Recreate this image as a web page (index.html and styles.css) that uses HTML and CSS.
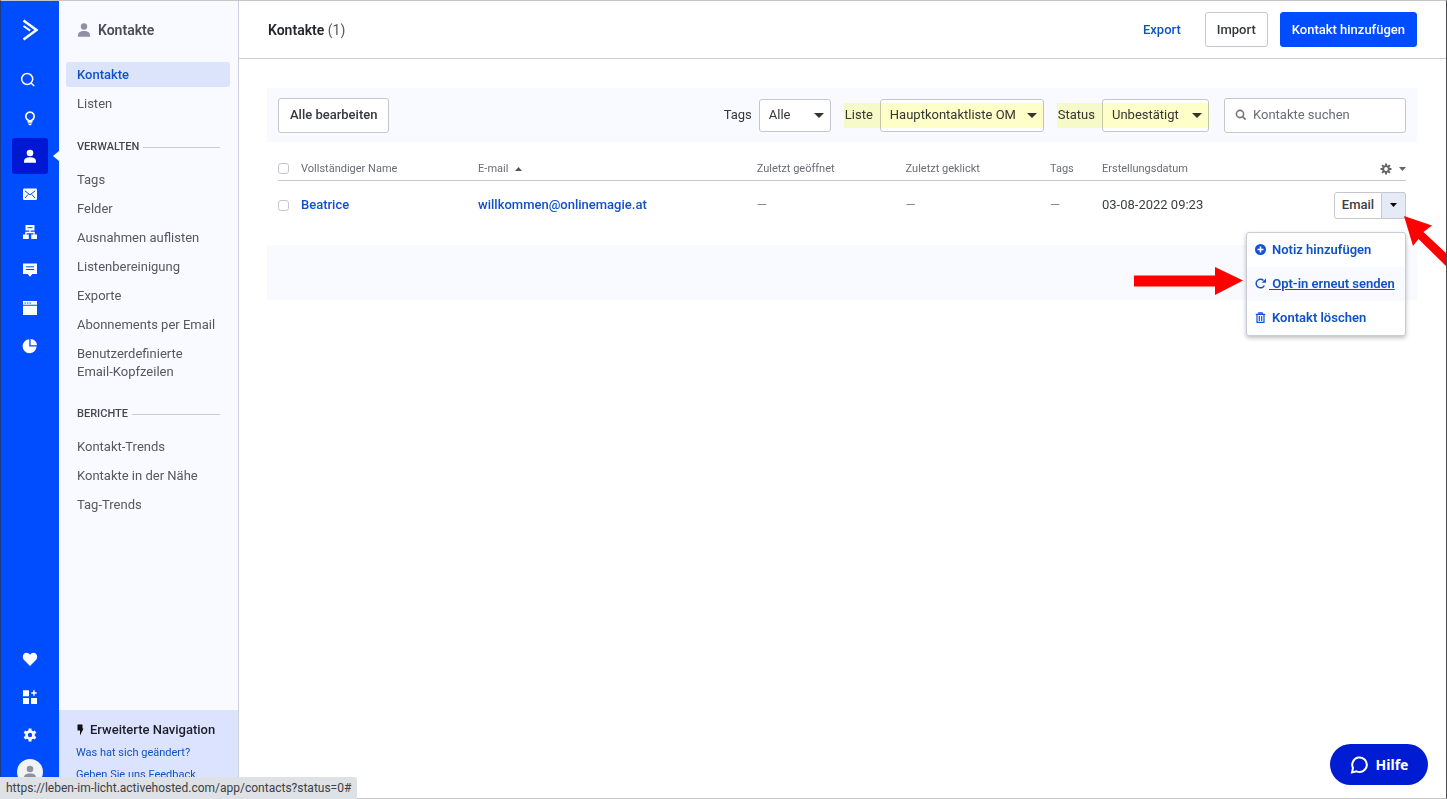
FILE: index.html
```html
<!DOCTYPE html>
<html lang="de">
<head>
<meta charset="utf-8">
<title>Kontakte</title>
<link rel="stylesheet" href="styles.css">
</head>
<body>
<div class="app">
  <nav class="rail" aria-label="Hauptnavigation">
    <a class="logo" href="#" aria-label="Startseite"><svg width="16" height="24" viewBox="0 0 16 24" fill="none" stroke="#fff"><path stroke-width="2.6" d="M1.500 2.500 14.500 12 1.500 21.500"/><path stroke-width="1.900" d="M1.500 8 8.200 12.600"/></svg></a>
    <a class="rail-item rail-search" href="#" aria-label="Suche"><svg width="16" height="16" viewBox="0 0 16 16" fill="none" stroke="#fff" stroke-width="1.500"><circle cx="7.200" cy="7" r="5.500"/><path d="m11 11 3.200 3"/></svg></a>
    <a class="rail-item" href="#" aria-label="Tipps"><svg width="16" height="16" viewBox="0 0 16 16"><path fill="none" stroke="#fff" stroke-width="1.800" d="M6.300 10.200A4.200 4.200 0 1 1 9.700 10.200V11H6.300Z"/><path fill="#fff" d="M5.800 12.200h4.400v1H5.800zM6.200 13.800h3.600l-.8 1.400H7z"/></svg></a>
    <a class="rail-item active" href="#" aria-label="Kontakte"><svg width="16" height="16" viewBox="0 0 16 16" fill="#fff"><circle cx="8" cy="5" r="3.300"/><path d="M2 14.800v-1.600c0-2.600 2.200-3.900 6-3.900s6 1.300 6 3.900v1.600z"/></svg></a>
    <a class="rail-item" href="#" aria-label="Kampagnen"><svg width="16" height="16" viewBox="0 0 16 16"><rect x="1" y="2.500" width="14" height="11.500" rx="1.200" fill="#fff"/><path fill="none" stroke="#004cff" stroke-width="1" d="m2.800 4.800 5.200 4 5.200-4M3 12l3.200-3.600M13 12 9.800 8.400"/></svg></a>
    <a class="rail-item" href="#" aria-label="Automatisierungen"><svg width="16" height="16" viewBox="0 0 16 16"><path fill="#fff" d="M3.500 1h9v5.500h-9zM1 10.500h5.800V15H1zM9.200 10.500H15V15H9.200z"/><path fill="none" stroke="#fff" stroke-width="1.300" d="M8 6v2.500M3.900 11V8.500h8.200V11"/><path stroke="#004cff" d="M5.500 3.700h5"/></svg></a>
    <a class="rail-item" href="#" aria-label="Unterhaltungen"><svg width="16" height="16" viewBox="0 0 16 16"><path fill="#fff" d="M1 1.500h14v10.500H10.300L8 14.800 5.700 12H1z"/><path stroke="#004cff" d="M3.800 4.800h8.400M3.800 7.500h8.400"/></svg></a>
    <a class="rail-item" href="#" aria-label="Website"><svg width="16" height="16" viewBox="0 0 16 16" fill="#fff"><path d="M1 1h14v3.800H1zM1 5.800h14V15H1z"/><path stroke="#004cff" stroke-dasharray="1.500 1" d="M2.500 3h7"/></svg></a>
    <a class="rail-item" href="#" aria-label="Berichte"><svg width="16" height="16" viewBox="0 0 16 16" fill="#fff"><path d="M7.300 1.200v7.300h7.300A7 7 0 1 1 7.300 1.200z"/><path d="M8.600.9a7 7 0 0 1 6.500 6.300H8.600z"/></svg></a>
    <div class="rail-bottom">
      <a class="rail-item" href="#" aria-label="Favoriten"><svg width="16" height="16" viewBox="0 0 16 16" fill="#fff"><path d="M8 15 2.300 9.200C-.5 6.300 1 1.800 4.500 1.800c1.500 0 2.700.8 3.500 2 .8-1.200 2-2 3.500-2 3.500 0 5 4.500 2.200 7.400z"/></svg></a>
      <a class="rail-item" href="#" aria-label="Apps"><svg width="16" height="16" viewBox="0 0 16 16" fill="#fff"><path d="M1 1.200h6v6H1zM1 9h6v6H1zM9 9h6v6H9zM11.200 1.200h1.500v2h2v1.500h-2v2h-1.500v-2h-2V3.200h2z"/></svg></a>
      <a class="rail-item" href="#" aria-label="Einstellungen"><svg width="16" height="16" viewBox="0 0 16 16"><g stroke="#fff" stroke-width="3"><path d="M8 1.500v13M2.400 4.800l11.200 6.400M2.400 11.200l11.200-6.400"/></g><circle cx="8" cy="8" r="4.800" fill="#fff"/><circle cx="8" cy="8" r="2.200" fill="#004cff"/></svg></a>
      <a class="avatar" href="#" aria-label="Profil"><svg width="16" height="18" viewBox="0 0 16 18" fill="#9090a0"><circle cx="8" cy="6" r="3.300"/><path d="M2 16v-1.500c0-2.600 2.200-4 6-4s6 1.400 6 4V16z"/></svg></a>
    </div>
  </nav>

  <aside class="sidebar">
    <h2 class="sidebar-title"><svg width="14" height="14" viewBox="0 0 14 14" fill="#8e90a6"><circle cx="7" cy="3.500" r="3.200"/><path d="M1 13.800v-1.600C1 9.600 3.200 8 7 8s6 1.600 6 4.200v1.600z"/></svg>Kontakte</h2>
    <ul class="menu">
      <li><a class="current" href="#">Kontakte</a></li>
      <li><a href="#">Listen</a></li>
    </ul>
    <h3 class="group">Verwalten</h3>
    <ul class="menu">
      <li><a href="#">Tags</a></li>
      <li><a href="#">Felder</a></li>
      <li><a href="#">Ausnahmen auflisten</a></li>
      <li><a href="#">Listenbereinigung</a></li>
      <li><a href="#">Exporte</a></li>
      <li><a href="#">Abonnements per Email</a></li>
      <li><a href="#">Benutzerdefinierte<br>Email-Kopfzeilen</a></li>
    </ul>
    <h3 class="group">Berichte</h3>
    <ul class="menu">
      <li><a href="#">Kontakt-Trends</a></li>
      <li><a href="#">Kontakte in der Nähe</a></li>
      <li><a href="#">Tag-Trends</a></li>
    </ul>
    <div class="promo">
      <h4><svg width="8" height="12" viewBox="0 0 8 12" fill="#111"><path d="M1.500.5H6.500V4.500H7.500L4 11.500V6.500H1.500z"/></svg>Erweiterte Navigation</h4>
      <a href="#">Was hat sich geändert?</a>
      <a href="#">Geben Sie uns Feedback</a>
    </div>
  </aside>

  <main class="main">
    <header class="topbar">
      <h1>Kontakte <span>(1)</span></h1>
      <a class="export" href="#">Export</a>
      <button class="btn">Import</button>
      <button class="btn primary">Kontakt hinzufügen</button>
    </header>

    <div class="content">
      <div class="toolbar">
        <button class="btn">Alle bearbeiten</button>
        <div class="filters">
          <div class="field">
            <label for="f-tags">Tags</label>
            <select id="f-tags" class="select-tags"><option>Alle</option></select>
            <svg class="caret" width="10" height="5" viewBox="0 0 10 5"><path d="M0 0h10L5 5z"/></svg>
          </div>
          <div class="field marked">
            <label for="f-list">Liste</label>
            <select id="f-list" class="select-list"><option>Hauptkontaktliste OM</option></select>
            <svg class="caret" width="10" height="5" viewBox="0 0 10 5"><path d="M0 0h10L5 5z"/></svg>
          </div>
          <div class="field marked">
            <label for="f-status">Status</label>
            <select id="f-status" class="select-status"><option>Unbestätigt</option></select>
            <svg class="caret" width="10" height="5" viewBox="0 0 10 5"><path d="M0 0h10L5 5z"/></svg>
          </div>
          <div class="search">
            <svg width="12" height="12" viewBox="0 0 12 12" fill="none" stroke="#777" stroke-width="1.600"><circle cx="5" cy="5" r="3.600"/><path d="m7.600 7.600 3 3"/></svg>
            <input type="text" placeholder="Kontakte suchen" aria-label="Kontakte suchen">
          </div>
        </div>
      </div>

      <table class="contacts">
        <colgroup><col class="c-check"><col class="c-name"><col class="c-mail"><col class="c-open"><col class="c-click"><col class="c-tags"><col><col class="c-act"></colgroup>
        <thead>
          <tr>
            <th><input type="checkbox" aria-label="Alle auswählen"></th>
            <th>Vollständiger Name</th>
            <th>E-mail <svg class="sort" width="7" height="4" viewBox="0 0 7 4"><path d="M0 4h7L3.500 0z"/></svg></th>
            <th>Zuletzt geöffnet</th>
            <th>Zuletzt geklickt</th>
            <th>Tags</th>
            <th>Erstellungsdatum</th>
            <th><button class="gear" aria-label="Spalten"><svg width="12" height="12" viewBox="0 0 12 12"><g stroke="#666" stroke-width="2"><path d="M6 .5v11M.5 6h11M2.100 2.100l7.800 7.800M2.100 9.900l7.800-7.800"/></g><circle cx="6" cy="6" r="3.800" fill="#666"/><circle cx="6" cy="6" r="1.900" fill="#fff"/></svg><svg width="7" height="4" viewBox="0 0 7 4" fill="#666"><path d="M0 0h7L3.500 4z"/></svg></button></th>
          </tr>
        </thead>
        <tbody>
          <tr>
            <td><input type="checkbox" aria-label="Beatrice auswählen"></td>
            <td><a href="#">Beatrice</a></td>
            <td><a href="#">willkommen@onlinemagie.at</a></td>
            <td class="none">—</td>
            <td class="none">—</td>
            <td class="none">—</td>
            <td>03-08-2022 09:23</td>
            <td>
              <div class="split">
                <button class="split-main">Email</button><button class="split-caret" aria-label="Weitere Aktionen"><svg width="7" height="4" viewBox="0 0 7 4"><path d="M0 0h7L3.500 4z"/></svg></button>
                <div class="dropdown">
                  <a href="#"><svg width="11" height="11" viewBox="0 0 11 11"><circle cx="5.500" cy="5.500" r="5.500" fill="#1051d8"/><path stroke="#fff" stroke-width="1.600" d="M5.500 2.500v6M2.500 5.500h6"/></svg><span>Notiz hinzufügen</span></a>
                  <a class="hovered" href="#"><svg width="11" height="11" viewBox="0 0 11 11"><path fill="none" stroke="#1051d8" stroke-width="1.500" d="M9.300 7.500A4.300 4.300 0 1 1 8.500 2.500"/><path fill="#1051d8" d="M11 .5v4.300H6.700z"/></svg><span>&nbsp;Opt-in erneut senden</span></a>
                  <a href="#"><svg width="11" height="11" viewBox="0 0 11 11" fill="none" stroke="#1051d8" stroke-width="1.200"><path d="M.8 2.300h9.400M3.800 2V.8h3.400V2M2 2.500v7.900h7V2.500M4.300 4v5M6.700 4v5"/></svg><span>Kontakt löschen</span></a>
                  <svg class="arrow-right" width="109" height="28" viewBox="0 0 109 28" fill="#f00"><path d="M0 8.500h81V0l28 13.500L81 28V19.500H0z"/></svg>
                  <svg class="arrow-up" width="43" height="52" viewBox="0 0 43 52" fill="#f00"><path d="m0 0 28 9.500-8.500 6.500L43 38v13L14.500 23 9 30z"/></svg>
                </div>
              </div>
            </td>
          </tr>
        </tbody>
      </table>
      <div class="table-foot"></div>
    </div>
  </main>
</div>
<button class="help"><svg width="19" height="19" viewBox="0 0 19 19" fill="none" stroke="#fff" stroke-width="2"><path d="M2 17.500 3 13A7.300 7.300 0 1 1 6.500 16.400z"/></svg>Hilfe</button>
<div class="status">https://leben-im-licht.activehosted.com/app/contacts?status=0#</div>
</body>
</html>
```

FILE: styles.css
```css
* { box-sizing: border-box; }
body { margin: 0; font: 13px/18px Roboto, "Liberation Sans", sans-serif; color: #35373d; background: #fff; }
a { color: #1051c8; text-decoration: none; }
button, input, select { font: inherit; color: inherit; }
svg { display: block; flex: none; }
h1, h2, h3, h4, ul { margin: 0; padding: 0; font-size: 13px; }

.app { display: flex; height: 100vh; overflow: hidden; border: 1px solid #c4c6c8; border-left-color: #1c3c88; border-right-color: #4a4a50; }

.rail { display: flex; flex-direction: column; align-items: center; gap: 2px; width: 58px; flex: none; padding: 17px 0 13px; background: #004cff; }
.logo { display: flex; margin-bottom: 18px; }
.rail-item { position: relative; display: flex; align-items: center; justify-content: center; width: 36px; height: 36px; border-radius: 3px; }
.rail-search { padding-right: 4px; }
.rail-item.active { background: #0018d4; }
.rail-item.active::after { content: ""; position: absolute; right: -11px; top: 13px; border: 5px solid transparent; border-left-width: 0; border-right: 6px solid #f8faff; }
.rail-bottom { display: flex; flex-direction: column; align-items: center; gap: 2px; margin-top: auto; }
.avatar { display: flex; align-items: center; justify-content: center; width: 26px; height: 26px; margin-top: 4px; border-radius: 50%; background: #f1f2f4; }

.sidebar { display: flex; flex-direction: column; width: 180px; flex: none; background: #f8faff; border-right: 1px solid #ccd0dc; }
.sidebar-title { display: flex; align-items: center; gap: 7px; height: 58px; padding-left: 18px; font-size: 14px; font-weight: 600; color: #4a4c54; }
.menu { list-style: none; display: flex; flex-direction: column; gap: 4px; padding: 3px 8px 0 7px; font-weight: 400; }
.menu a { display: block; padding: 4px 11px 3px; border-radius: 3px; color: #55585f; }
.menu a.current { background: #dce4fc; color: #1051c8; font-weight: 500; }
.group { display: flex; align-items: center; gap: 4px; padding: 0 18px; margin: 22px 0 8px; font-size: 11px; font-weight: 500; text-transform: uppercase; color: #44474e; }
.group::after { content: ""; flex: 1; border-top: 1px solid #c8cbd2; }
.menu + .group ~ .group { margin-top: 21px; }
.promo { display: flex; flex-direction: column; gap: 4px; height: 88px; margin-top: auto; padding: 11px 17px 0; background: #dbe3fe; font-size: 11px; white-space: nowrap; }
.promo h4 { display: flex; align-items: center; gap: 6px; margin-bottom: 1px; font-weight: 500; color: #1c1e28; }

.main { flex: 1; min-width: 0; }
.topbar { display: flex; align-items: center; height: 58px; padding: 0 29px; border-bottom: 1px solid #ccced2; }
.topbar h1 { margin-right: auto; font-size: 14px; font-weight: 600; color: #24262c; }
.topbar h1 span { font-weight: 400; color: #55585f; }
.export { margin-right: 24px; font-weight: 500; }
.btn { height: 35px; padding: 0 11px; border: 1px solid #c4c7ce; border-radius: 3px; background: #fff; font-weight: 500; white-space: nowrap; }
.btn.primary { margin-left: 12px; border-color: #004cff; background: #004cff; color: #fff; }

.content { padding: 29px 29px 0 28px; }
.toolbar { display: flex; align-items: center; justify-content: space-between; height: 54px; padding: 0 11px; background: #f8faff; }
.filters { display: flex; align-items: center; gap: 14px; }
.field { position: relative; display: flex; align-items: center; gap: 7px; }
.field select { height: 33px; padding: 0 9px; border: 1px solid #c4c7ce; border-radius: 3px; background: #fff; appearance: none; }
.select-tags { width: 72px; }
.select-list { width: 164px; }
.select-status { width: 107px; }
.caret { position: absolute; right: 7px; top: 14px; fill: #333; pointer-events: none; }
.marked::after { content: ""; position: absolute; inset: 4px 0 4px -1px; background: #fdfec8; mix-blend-mode: multiply; pointer-events: none; }
.search { display: flex; align-items: center; gap: 6px; width: 182px; height: 35px; padding: 0 10px; margin-left: 1px; border: 1px solid #c4c7ce; border-radius: 3px; background: #fff; }
.search input { width: 100%; min-width: 0; padding: 0; border: 0; outline: 0; background: none; }
.search input::placeholder { color: #6a6d74; opacity: 1; }

.contacts { width: calc(100% - 22px); margin: 16px 11px 0; border-collapse: collapse; table-layout: fixed; }
.contacts th, .contacts td { padding: 0; text-align: left; }
.contacts th { height: 22px; font-size: 11px; font-weight: 400; color: #6a6d74; border-bottom: 1px solid #c8cace; }
.contacts td { height: 50px; color: #3c3e44; }
.contacts td a { font-weight: 500; }
.contacts td.none { color: #888; }
.contacts input { display: block; appearance: none; width: 11px; height: 11px; margin: 0; border: 1px solid #c4c7ce; border-radius: 3px; background: #fff; }
.c-check { width: 23px; }
.c-name { width: 15.7%; }
.c-mail { width: 24.7%; }
.c-open { width: 13.2%; }
.c-click { width: 12.8%; }
.c-tags { width: 52px; }
.c-act { width: 72px; }
.sort { display: inline-block; margin-left: 4px; fill: #555; vertical-align: middle; }
.gear { display: flex; align-items: center; gap: 7px; margin-left: auto; padding: 0; border: 0; background: none; }

.split { position: relative; display: flex; height: 27px; }
.split button { display: flex; align-items: center; justify-content: center; padding: 0; border: 1px solid #c4c7ce; background: #fff; font-weight: 500; }
.split .split-main { flex: 1; border-radius: 3px 0 0 3px; }
.split .split-caret { width: 24px; border-left: 0; border-radius: 0 3px 3px 0; background: #e4eaf6; }
.dropdown { position: absolute; right: 0; top: 40px; width: 160px; border: 1px solid #c8ccd4; border-radius: 3px; background: #fff; box-shadow: 0 2px 4px rgba(0, 0, 0, .25); }
.dropdown .arrow-right { position: absolute; right: 162px; top: 34px; }
.dropdown .arrow-up { position: absolute; left: 157px; top: -17px; }
.dropdown a { display: flex; align-items: center; height: 34px; padding-left: 8px; color: #1051c8; white-space: nowrap; }
.dropdown a span { margin-left: 6px; font-weight: 600; }
.dropdown a.hovered { background: #f8faff; }
.dropdown a.hovered span { margin-left: 3px; text-decoration: underline; }
.table-foot { height: 55px; margin-top: 15px; background: #f8faff; }

.help { position: fixed; right: 19px; bottom: 14px; display: flex; align-items: center; justify-content: center; gap: 7px; width: 98px; height: 41px; border: 0; border-radius: 21px; background: #001cd3; color: #fff; font: 700 14px/20px "Noto Sans", sans-serif; }
.status { position: fixed; left: 0; bottom: 0; height: 22px; padding: 0 6px; background: #dee1e6; border-top-right-radius: 3px; color: #3c4043; font: 12px/22px Roboto, "Noto Sans", sans-serif; }
```
